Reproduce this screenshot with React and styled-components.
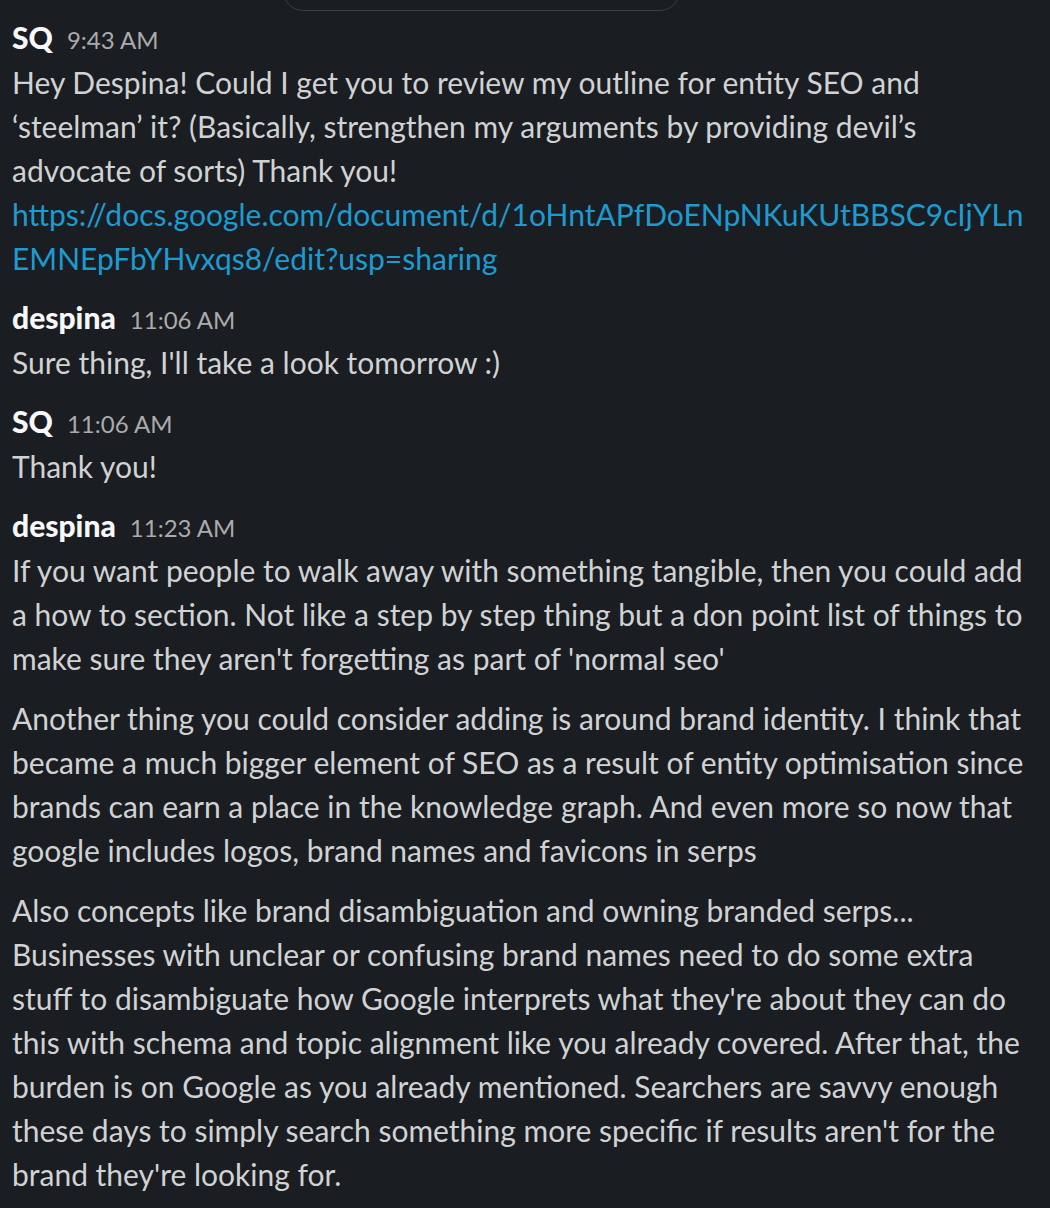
import React from 'react';
import styled, { createGlobalStyle } from 'styled-components';

const GlobalStyle = createGlobalStyle`
  html, body {
    margin: 0;
    padding: 0;
    background: #1a1d21;
  }
  body {
    font-family: Lato, "Noto Sans", sans-serif;
    -webkit-font-smoothing: antialiased;
  }
`;

const Feed = styled.div`
  min-height: 100vh;
  background: #1a1d21;
  color: #d1d2d3;
  padding: 0 14px 20px 12px;
  box-sizing: border-box;
  overflow: hidden;
`;

// date pill, only its lower edge is still on screen
const DayPillRow = styled.div`
  height: 11px;
  padding-left: 271px;
  overflow: hidden;
`;

const DayPill = styled.div`
  width: 397px;
  height: 40px;
  margin-top: -29px;
  border: 1px solid #3b3d41;
  border-radius: 20px;
  box-sizing: border-box;
`;

const Message = styled.div`
  margin-top: ${(p) => (p.$first ? '5px' : '16px')};
`;

const Header = styled.div`
  display: flex;
  align-items: baseline;
  gap: 14px;
  height: 44px;
  line-height: 42px;
`;

const Name = styled.span`
  font-size: 30px;
  font-weight: 900;
  color: #f8f8f8;
`;

const Time = styled.span`
  font-size: 24px;
  color: #ababad;
`;

const Para = styled.p`
  margin: 0;
  font-size: 30px;
  line-height: 44px;
  & + & {
    margin-top: 16px;
  }
`;

const Link = styled.a`
  color: #1d9bd1;
  text-decoration: none;
  word-break: break-all;
`;

const messages = [
  {
    name: 'SQ',
    time: '9:43 AM',
    paras: [
      <>
        Hey Despina! Could I get you to review my outline for entity SEO and
        ‘steelman’ it? (Basically, strengthen my arguments by providing devil’s
        advocate of sorts) Thank you!
        <br />
        <Link href="#">
          https://docs.google.com/document/d/1oHntAPfDoENpNKuKUtBBSC9cIjYLnEMNEpFbYHvxqs8/edit?usp=sharing
        </Link>
      </>,
    ],
  },
  {
    name: 'despina',
    time: '11:06 AM',
    paras: ["Sure thing, I'll take a look tomorrow :)"],
  },
  {
    name: 'SQ',
    time: '11:06 AM',
    paras: ['Thank you!'],
  },
  {
    name: 'despina',
    time: '11:23 AM',
    paras: [
      "If you want people to walk away with something tangible, then you could add a how to section. Not like a step by step thing but a don point list of things to make sure they aren't forgetting as part of 'normal seo'",
      'Another thing you could consider adding is around brand identity. I think that became a much bigger element of SEO as a result of entity optimisation since brands can earn a place in the knowledge graph. And even more so now that google includes logos, brand names and favicons in serps',
      "Also concepts like brand disambiguation and owning branded serps... Businesses with unclear or confusing brand names need to do some extra stuff to disambiguate how Google interprets what they're about they can do this with schema and topic alignment like you already covered. After that, the burden is on Google as you already mentioned. Searchers are savvy enough these days to simply search something more specific if results aren't for the brand they're looking for.",
    ],
  },
];

const App = () => (
  <>
    <GlobalStyle />
    <Feed>
      <DayPillRow>
        <DayPill />
      </DayPillRow>
      {messages.map((m, i) => (
        <Message key={i} $first={i === 0}>
          <Header>
            <Name>{m.name}</Name>
            <Time>{m.time}</Time>
          </Header>
          {m.paras.map((p, j) => (
            <Para key={j}>{p}</Para>
          ))}
        </Message>
      ))}
    </Feed>
  </>
);

export default App;
